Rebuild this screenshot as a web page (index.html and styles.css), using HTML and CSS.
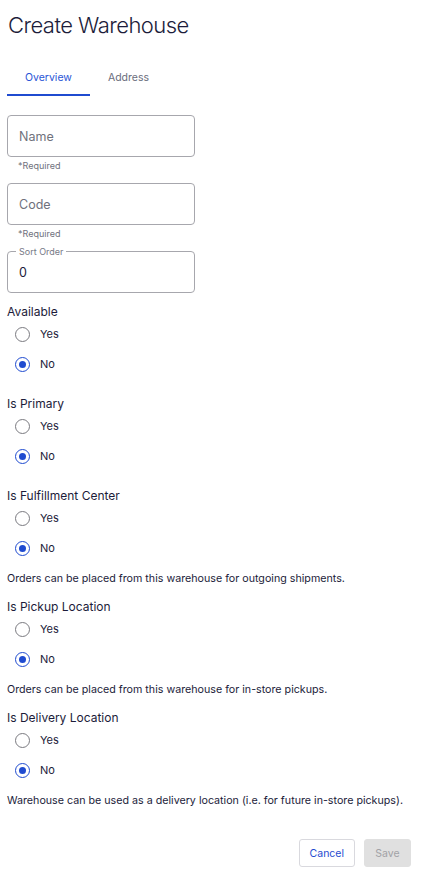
FILE: index.html
```html
<!DOCTYPE html>
<html>
<head>
<meta charset="utf-8">
<link rel="stylesheet" href="styles.css">
</head>
<body>
<div class="page">
  <h1 class="title">Create Warehouse</h1>
  <div class="tabs">
    <div class="tab active">Overview</div>
    <div class="tab">Address</div>
  </div>
  <div class="field">
    <div class="input"><span class="placeholder">Name</span></div>
    <div class="helper">*Required</div>
  </div>
  <div class="field">
    <div class="input"><span class="placeholder">Code</span></div>
    <div class="helper">*Required</div>
  </div>
  <div class="field">
    <div class="input outlined"><span class="legend">Sort Order</span><span class="value">0</span></div>
  </div>

  <div class="group first">
    <div class="label">Available</div>
    <div class="radios">
      <div class="radio"><span class="circle"></span>Yes</div>
      <div class="radio"><span class="circle on"></span>No</div>
    </div>
  </div>
  <div class="group">
    <div class="label">Is Primary</div>
    <div class="radios">
      <div class="radio"><span class="circle"></span>Yes</div>
      <div class="radio"><span class="circle on"></span>No</div>
    </div>
  </div>
  <div class="group">
    <div class="label">Is Fulfillment Center</div>
    <div class="radios">
      <div class="radio"><span class="circle"></span>Yes</div>
      <div class="radio"><span class="circle on"></span>No</div>
    </div>
    <div class="desc">Orders can be placed from this warehouse for outgoing shipments.</div>
  </div>
  <div class="group">
    <div class="label">Is Pickup Location</div>
    <div class="radios">
      <div class="radio"><span class="circle"></span>Yes</div>
      <div class="radio"><span class="circle on"></span>No</div>
    </div>
    <div class="desc">Orders can be placed from this warehouse for in-store pickups.</div>
  </div>
  <div class="group">
    <div class="label">Is Delivery Location</div>
    <div class="radios">
      <div class="radio"><span class="circle"></span>Yes</div>
      <div class="radio"><span class="circle on"></span>No</div>
    </div>
    <div class="desc">Warehouse can be used as a delivery location (i.e. for future in-store pickups).</div>
  </div>

  <div class="actions">
    <button class="btn cancel">Cancel</button>
    <button class="btn save">Save</button>
  </div>
</div>
</body>
</html>
```
FILE: styles.css
```css
html, body {
  margin: 0;
  padding: 0;
  background: #ffffff;
}
body {
  font-family: Inter, "Noto Sans", sans-serif;
  color: #1c1c3a;
}
.page {
  padding: 0 13px 0 7px;
}
.title {
  margin: 0;
  padding-top: 11px;
  padding-left: 1px;
  font-size: 22px;
  font-weight: 300;
  letter-spacing: -0.55px;
  line-height: 28px;
  color: #1c1c3a;
}
.tabs {
  display: flex;
  margin-top: 29px;
}
.tab {
  font-size: 10.5px;
  line-height: 14px;
  padding: 3px 18px 9px 18px;
  color: #6a6d7c;
  border-bottom: 2px solid transparent;
}
.tab.active {
  color: #2a55d6;
  border-bottom-color: #1f4bd0;
}
.field {
  width: 188px;
}
.tabs + .field {
  margin-top: 19px;
}
.field + .field {
  margin-top: 8px;
}
.input {
  position: relative;
  box-sizing: border-box;
  height: 42px;
  border: 1px solid #a7a7ad;
  border-radius: 4px;
  display: flex;
  align-items: center;
  padding-left: 11px;
  font-size: 12.5px;
}
.placeholder {
  color: #6f717c;
}
.value {
  color: #1c1c3a;
}
.legend {
  position: absolute;
  top: -6px;
  left: 8px;
  padding: 0 3px;
  background: #fff;
  font-size: 9px;
  line-height: 11px;
  color: #777986;
}
.helper {
  font-size: 9px;
  line-height: 11px;
  color: #6f717c;
  padding: 3px 0 0 11px;
  height: 15px;
}
.group {
  margin-top: 14px;
}
.group.first {
  margin-top: 11px;
}
.label {
  font-size: 12px;
  line-height: 15px;
  color: #1c1c3a;
}
.radios {
  padding-bottom: 3px;
}
.radio {
  display: flex;
  align-items: center;
  height: 30px;
  font-size: 11px;
  color: #1c1c3a;
  padding-left: 8px;
}
.circle {
  box-sizing: border-box;
  width: 15px;
  height: 15px;
  border: 1.5px solid #7a7a80;
  border-radius: 50%;
  margin-right: 10px;
  position: relative;
}
.circle.on {
  border-color: #1f4bd0;
}
.circle.on::after {
  content: "";
  position: absolute;
  left: 50%;
  top: 50%;
  width: 7px;
  height: 7px;
  margin: -3.5px 0 0 -3.5px;
  background: #1f4bd0;
  border-radius: 50%;
}
.desc {
  font-size: 10.7px;
  line-height: 14px;
  margin-top: 6px;
  margin-bottom: -1px;
  color: #1c1c3a;
}
.actions {
  display: flex;
  justify-content: flex-end;
  gap: 9px;
  margin-top: 32px;
}
.btn {
  font-family: Inter, "Noto Sans", sans-serif;
  font-size: 10.5px;
  height: 28px;
  border-radius: 3px;
  padding: 0 10px;
}
.btn.cancel {
  background: #fff;
  border: 1px solid #d9d9de;
  color: #1f4bd0;
}
.btn.save {
  width: 47px;
  background: #e0e0e0;
  border: 1px solid #e0e0e0;
  color: #a2a2a6;
}
```
